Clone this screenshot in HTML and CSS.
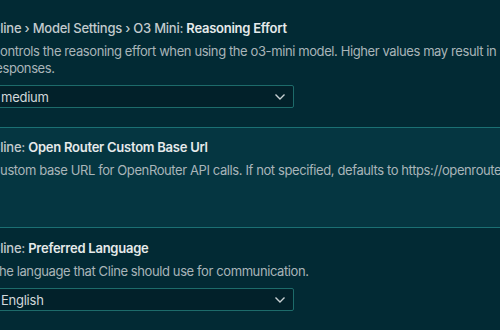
FILE: index.html
```html
<!DOCTYPE html>
<html lang="en">
<head>
    <meta charset="UTF-8">
    <meta name="viewport" content="width=device-width, initial-scale=1.0">
    <title>Settings</title>
    <link rel="stylesheet" href="styles.css">
</head>
<body>
    <div class="settings-list">
        <!-- O3 Mini reasoning effort -->
        <div class="setting-item">
            <div class="setting-title">
                <span class="category">Cline › Model Settings › O3 Mini: </span><span class="label">Reasoning Effort</span>
            </div>
            <div class="setting-desc">Controls the reasoning effort when using the o3-mini model. Higher values may result in more thorough but slower responses.</div>
            <div class="select-box">
                <span>medium</span>
                <svg class="chevron" width="12" height="8" viewBox="0 0 12 8">
                    <path d="M1.5 1.5 L6 6 L10.5 1.5" fill="none" stroke="#c8d0d3" stroke-width="1.4"/>
                </svg>
            </div>
        </div>

        <!-- Open Router base url (focused row) -->
        <div class="setting-item focused">
            <div class="setting-title">
                <span class="category">Cline: </span><span class="label">Open Router Custom Base Url</span>
            </div>
            <div class="setting-desc">Custom base URL for OpenRouter API calls. If not specified, defaults to https://openrouter.ai/api/v1</div>
            <div class="input-space"></div>
        </div>

        <!-- Preferred language -->
        <div class="setting-item">
            <div class="setting-title">
                <span class="category">Cline: </span><span class="label">Preferred Language</span>
            </div>
            <div class="setting-desc">The language that Cline should use for communication.</div>
            <div class="select-box">
                <span>English</span>
                <svg class="chevron" width="12" height="8" viewBox="0 0 12 8">
                    <path d="M1.5 1.5 L6 6 L10.5 1.5" fill="none" stroke="#c8d0d3" stroke-width="1.4"/>
                </svg>
            </div>
        </div>
    </div>
</body>
</html>
```

FILE: styles.css
```css
html, body {
    margin: 0;
    padding: 0;
    overflow: hidden;
}

body {
    font-family: Inter, "Noto Sans", sans-serif;
    font-size: 13px;
    letter-spacing: -0.25px;
    background-color: #022a34;
    color: #c6ced1;
    width: 500px;
    height: 330px;
}

.settings-list {
    margin-left: -9px;
    padding-top: 8px;
    width: 760px;
}

.setting-item {
    padding: 10px 60px 18px 0;
    border-top: 1px solid transparent;
    border-bottom: 1px solid transparent;
}

.setting-item.focused {
    background-color: #053641;
    border-top-color: #1b7073;
    border-bottom-color: #1b7073;
    padding-bottom: 18px;
}

.setting-title {
    line-height: 18px;
    white-space: nowrap;
}

.category {
    color: #c3cbce;
    font-weight: 500;
}

.label {
    color: #e6eaeb;
    font-weight: 600;
}

.setting-desc {
    margin-top: 6px;
    line-height: 17px;
    color: #a9b5b9;
    letter-spacing: -0.4px;
}

.select-box {
    margin-top: 8px;
    width: 303px;
    height: 23px;
    box-sizing: border-box;
    border: 1px solid #1d6b6a;
    border-radius: 2px;
    background-color: #02212a;
    color: #d2d8da;
    display: flex;
    align-items: center;
    justify-content: space-between;
    padding: 0 7px 0 9px;
}

.chevron {
    display: block;
}

.input-space {
    height: 30px;
}
```
